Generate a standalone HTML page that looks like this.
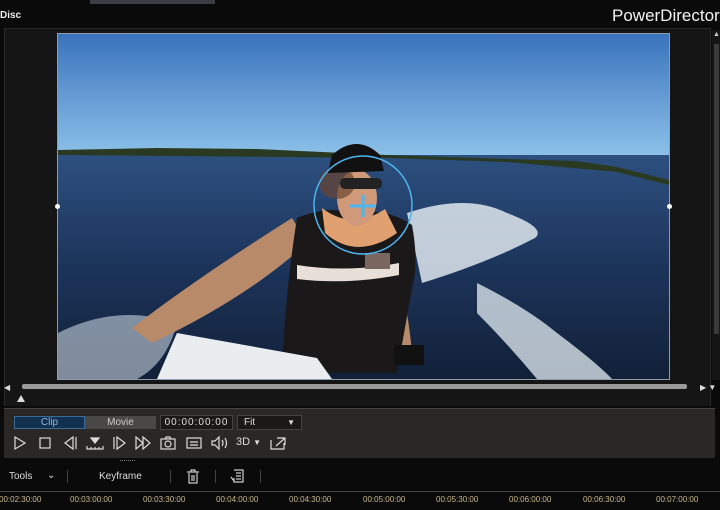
<!DOCTYPE html>
<html><head><style>
*{margin:0;padding:0;box-sizing:border-box}
body{width:720px;height:510px;background:#0b0a0a;position:relative;overflow:hidden;font-family:"Liberation Sans",sans-serif;color:#ddd}
.abs{position:absolute}
</style></head><body>
<div class="abs" style="left:90px;top:0;width:125px;height:4px;background:#3a3d44"></div>
<div class="abs" style="left:0;top:10px;font-size:10px;font-weight:bold;color:#eee">Disc</div>
<div class="abs" style="left:612px;top:6px;font-size:17px;color:#f2f2f2">PowerDirector</div>
<div class="abs" style="left:4px;top:28px;width:707px;height:380px;background:#161515;border:1px solid #2a2a2a"></div>
<div class="abs" style="left:712px;top:30px;width:8px;height:350px;background:#151515"></div>
<div class="abs" style="left:714px;top:44px;width:5px;height:290px;background:#3a3a3a"></div>
<div class="abs" style="left:713px;top:31px;font-size:7px;color:#ccc">▲</div>
<svg class="abs" style="left:57px;top:33px" width="613" height="347">
<defs>
<linearGradient id="sky" x1="0" y1="0" x2="0" y2="1"><stop offset="0" stop-color="#3a73bc"/><stop offset="1" stop-color="#8ec3ea"/></linearGradient>
<linearGradient id="wat" x1="0" y1="0" x2="0" y2="1"><stop offset="0" stop-color="#2d5080"/><stop offset="0.5" stop-color="#1c345a"/><stop offset="1" stop-color="#122038"/></linearGradient>
</defs>
<rect x="0" y="0" width="613" height="347" fill="#8e9bb0"/>
<rect x="1" y="1" width="611" height="125" fill="url(#sky)"/>
<rect x="1" y="122" width="611" height="224" fill="url(#wat)"/>
<path d="M1 117 L100 115 L200 116 L330 122 L450 126 L520 128 L560 134 L612 147 L612 152 L560 139 L450 129 L330 125 L1 122Z" fill="#2a3a22"/>
<path d="M350 180 Q410 160 450 180 Q490 195 478 205 Q430 230 365 250Z" fill="#dfe8ef" opacity=".85"/>
<path d="M420 250 Q470 275 500 300 Q540 330 555 346 L480 346 Q450 310 420 280Z" fill="#d8e2ea" opacity=".8"/>
<path d="M1 300 Q60 270 120 290 Q110 330 80 346 L1 346Z" fill="#c8d4e0" opacity=".6"/>
<path d="M75 295 Q140 245 235 185 L250 210 Q190 265 95 310Z" fill="#b88a6a"/>
<path d="M330 205 Q350 260 355 320 L338 322 Q330 260 322 215Z" fill="#b88a6a"/>
<path d="M240 185 Q270 172 300 180 Q330 175 355 192 Q362 230 355 255 L340 340 L225 340 Q228 260 240 185Z" fill="#1a1818"/>
<path d="M265 175 Q295 198 328 176 L340 200 Q300 228 268 200Z" fill="#e0a070"/>
<path d="M240 232 Q290 240 342 230 L342 242 Q290 252 240 246Z" fill="#e8e0d8"/>
<rect x="308" y="220" width="25" height="16" fill="#7a6860"/>
<ellipse cx="300" cy="165" rx="20" ry="28" fill="#d09a7a"/>
<ellipse cx="280" cy="150" rx="18" ry="16" fill="#6a4530" opacity=".7"/>
<path d="M275 122 Q300 100 323 122 L327 138 L271 140Z" fill="#111"/>
<rect x="283" y="145" width="42" height="11" rx="5" fill="#222"/>
<path d="M120 300 L260 325 L275 346 L100 346Z" fill="#e9edf0"/>
<rect x="337" y="312" width="30" height="20" fill="#111"/>
<circle cx="306" cy="172" r="49" fill="none" stroke="#4db6f0" stroke-width="1.5"/>
<path d="M293 173 H319 M306 162 V184" stroke="#4db6f0" stroke-width="3"/>
</svg>
<div class="abs" style="left:55px;top:204px;width:5px;height:5px;border-radius:50%;background:#fff"></div>
<div class="abs" style="left:667px;top:204px;width:5px;height:5px;border-radius:50%;background:#fff"></div>
<div class="abs" style="left:4px;top:383px;font-size:8px;color:#ddd">◀</div>
<div class="abs" style="left:22px;top:384px;width:665px;height:5px;background:#9a9a9a;border-radius:2px"></div>
<div class="abs" style="left:700px;top:383px;font-size:8px;color:#ddd">▶ ▼</div>
<div class="abs" style="left:17px;top:395px;width:0;height:0;border-left:4px solid transparent;border-right:4px solid transparent;border-bottom:7px solid #ddd"></div>
<div class="abs" style="left:4px;top:406px;width:707px;height:2px;background:#0a0a0a"></div>
<div class="abs" style="left:4px;top:408px;width:711px;height:50px;background:#2a2826;border-top:1px solid #444"></div>
<div class="abs" style="left:14px;top:416px;width:71px;height:13px;background:#13304f;border:1px solid #3a6c9a;font-size:10px;color:#8ab8e8;text-align:center;line-height:11px">Clip</div>
<div class="abs" style="left:85px;top:416px;width:71px;height:13px;background:#4a4846;font-size:10px;color:#ccc;text-align:center;line-height:13px">Movie</div>
<div class="abs" style="left:160px;top:415px;width:73px;height:15px;background:#1a1918;border:1px solid #444;font-size:10px;color:#ddd;text-align:center;line-height:13px;letter-spacing:1px">00:00:00:00</div>
<div class="abs" style="left:237px;top:415px;width:65px;height:15px;background:#1a1918;border:1px solid #444;font-size:10px;color:#ddd;line-height:13px;padding-left:6px">Fit<span style="position:absolute;right:6px;font-size:8px">▼</span></div>
<svg class="abs" style="left:10px;top:434px" width="290" height="18" fill="none" stroke="#ddd" stroke-width="1.2">
<path d="M5 3 L15 9 L5 15Z"/>
<rect x="30" y="4" width="10" height="10"/>
<path d="M63 3 L55 9 L63 15Z M66 3 V15"/>
<path d="M77 12 V15 H93 V12 M81 13 V15 M85 13 V15 M89 13 V15"/><path d="M81 4 H89 L85 9Z" fill="#ddd"/>
<path d="M104 3 V15 M107 3 L115 9 L107 15Z"/>
<path d="M126 3 L133 9 L126 15Z M133 3 L140 9 L133 15Z"/>
<rect x="151" y="5" width="14" height="10"/><circle cx="158" cy="10" r="3"/><path d="M155 5 L156 3 H160 L161 5"/>
<rect x="177" y="4" width="14" height="10"/><path d="M180 8 H188 M180 11 H188"/>
<path d="M202 7 H205 L209 3 V15 L205 11 H202Z M212 6 Q214 9 212 12 M215 4 Q218 9 215 14"/>
<path d="M261 6 V15 H274 V9 M267 4 H275 V11 M275 4 L266 12"/>
</svg>
<div class="abs" style="left:236px;top:436px;font-size:11px;color:#ddd">3D <span style="font-size:8px">▼</span></div>
<div class="abs" style="left:120px;top:460px;width:15px;height:1px;border-top:1px dotted #777"></div>
<div class="abs" style="left:9px;top:471px;font-size:10px;color:#ddd">Tools</div>
<div class="abs" style="left:47px;top:470px;font-size:10px;color:#ddd">⌄</div>
<div class="abs" style="left:67px;top:470px;width:1px;height:13px;background:#444"></div>
<div class="abs" style="left:99px;top:471px;font-size:10px;color:#ddd">Keyframe</div>
<div class="abs" style="left:170px;top:470px;width:1px;height:13px;background:#444"></div>
<svg class="abs" style="left:186px;top:469px" width="14" height="15" fill="none" stroke="#ccc" stroke-width="1.2"><path d="M1 3 H13 M5 3 V1 H9 V3 M3 4 V14 H11 V4 M6 6 V12 M8 6 V12"/></svg>
<div class="abs" style="left:215px;top:470px;width:1px;height:13px;background:#444"></div>
<svg class="abs" style="left:230px;top:469px" width="14" height="15" fill="none" stroke="#ccc" stroke-width="1.2"><path d="M4 1 H13 V13 H4 V9 M6 4 H11 M6 7 H11 M6 10 H11 M1 8 L4 12"/></svg>
<div class="abs" style="left:260px;top:470px;width:1px;height:13px;background:#444"></div>
<div class="abs" style="left:0;top:491px;width:720px;height:1px;background:#4a4538"></div>
<div class="abs" style="left:0;top:495px;font-size:8px;color:#c8b88a;white-space:nowrap;width:720px">
<span class="abs" style="left:-1px">00:02:30:00</span><span class="abs" style="left:70px">00:03:00:00</span><span class="abs" style="left:143px">00:03:30:00</span><span class="abs" style="left:216px">00:04:00:00</span><span class="abs" style="left:289px">00:04:30:00</span><span class="abs" style="left:363px">00:05:00:00</span><span class="abs" style="left:436px">00:05:30:00</span><span class="abs" style="left:509px">00:06:00:00</span><span class="abs" style="left:583px">00:06:30:00</span><span class="abs" style="left:656px">00:07:00:00</span>
</div>
</body></html>
